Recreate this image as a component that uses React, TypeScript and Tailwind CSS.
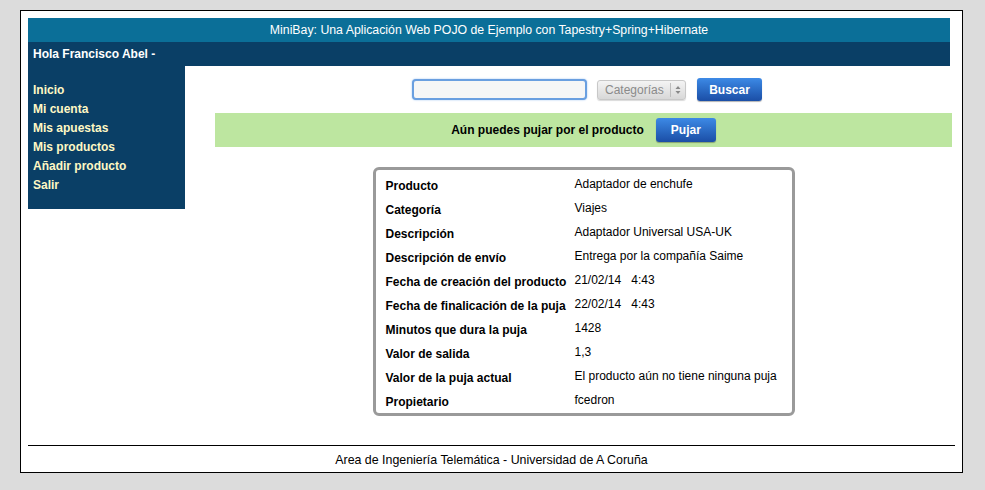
import React from "react";

const rows: [string, React.ReactNode][] = [
  ["Producto", "Adaptador de enchufe"],
  ["Categoría", "Viajes"],
  ["Descripción", "Adaptador Universal USA-UK"],
  ["Descripción de envío", "Entrega por la compañía Saime"],
  ["Fecha de creación del producto", <span>21/02/14&nbsp;&nbsp;&nbsp;4:43</span>],
  ["Fecha de finalicación de la puja", <span>22/02/14&nbsp;&nbsp;&nbsp;4:43</span>],
  ["Minutos que dura la puja", "1428"],
  ["Valor de salida", "1,3"],
  ["Valor de la puja actual", "El producto aún no tiene ninguna puja"],
  ["Propietario", "fcedron"],
];

const menu = ["Inicio", "Mi cuenta", "Mis apuestas", "Mis productos", "Añadir producto", "Salir"];

function BlueButton({ label, w, h }: { label: string; w: string; h: string }) {
  return (
    <button
      className={`${w} ${h} rounded-[3px] bg-gradient-to-b from-[#3d8ae6] to-[#1b4ea6] text-white font-bold text-[12px] flex items-center justify-center shadow-[0_1px_1px_rgba(0,0,0,0.3)]`}
    >
      {label}
    </button>
  );
}

export default function App() {
  return (
    <div
      className="w-[985px] h-[490px] bg-[#dcdcdc] pt-[10px] pl-[20px]"
      style={{ fontFamily: '"Liberation Sans", Arial, sans-serif' }}
    >
      <div className="w-[943px] h-[463px] bg-white border border-black pt-[7px] pl-[7px] flex flex-col">
        {/* Header */}
        <div className="w-[922px] h-[24px] bg-[#0b6f98] text-white text-[12.3px] flex items-center justify-center">
          MiniBay: Una Aplicación Web POJO de Ejemplo con Tapestry+Spring+Hibernate
        </div>
        <div className="w-[922px] h-[24px] bg-[#0a3f66] text-white text-[12px] font-bold flex items-center pl-[5px]">
          Hola Francisco Abel -
        </div>

        <div className="flex">
          {/* Sidebar */}
          <div className="w-[157px] h-[143px] bg-[#0a3f66] pt-[17px] pl-[5px] flex flex-col self-start">
            {menu.map((m) => (
              <div key={m} className="h-[19px] text-[12px] font-bold text-[#fff8c4] leading-[14px]">
                {m}
              </div>
            ))}
          </div>

          {/* Main */}
          <div className="ml-[30px] w-[737px] flex flex-col items-center">
            <div className="mt-[12px] h-[23px] flex items-center ml-[7px]">
              <div className="w-[175px] h-[21px] rounded-[4px] border-2 border-[#6a9fe0] bg-[#f6f6f6] shadow-[0_0_2px_#9cc2f0]" />
              <div className="ml-[10px] w-[89px] h-[20px] rounded-[3px] bg-gradient-to-b from-[#f4f4f4] to-[#d8d8d8] border border-[#c8c8c8] flex items-center text-[12px] text-[#8a8a8a] shadow-[0_1px_1px_rgba(0,0,0,0.15)]">
                <span className="pl-[7px] w-[72px]">Categorías</span>
                <span className="h-[14px] border-l border-[#bdbdbd]" />
                <svg width="10" height="12" viewBox="0 0 10 12" className="ml-[2px]">
                  <path d="M5 2 L7.5 5 L2.5 5 Z" fill="#888" />
                  <path d="M5 10 L7.5 7 L2.5 7 Z" fill="#888" />
                </svg>
              </div>
              <div className="ml-[11px]">
                <BlueButton label="Buscar" w="w-[65px]" h="h-[23px]" />
              </div>
            </div>

            <div className="mt-[12px] w-[737px] h-[34px] bg-[#bde6a0] flex items-center justify-center">
              <span className="text-[12px] font-bold text-black">Aún puedes pujar por el producto</span>
              <div className="ml-[12px]">
                <BlueButton label="Pujar" w="w-[60px]" h="h-[24px]" />
              </div>
            </div>

            <div className="mt-[20px] w-[422px] border-[3px] border-[#9a9a9a] rounded-[6px] pt-[3px] pl-[10px] text-[12px] text-black">
              {rows.map(([k, v]) => (
                <div key={k} className="h-[24px] flex">
                  <div className="w-[189px] font-bold pt-[6px] leading-[14px]">{k}</div>
                  <div className="pt-[4px] leading-[14px]">{v}</div>
                </div>
              ))}
            </div>
          </div>
        </div>

        {/* Footer */}
        <div className="mt-[29px] w-[927px] border-t border-black pt-[7px] text-center text-[12.4px] text-black leading-[14px]">
          Area de Ingeniería Telemática - Universidad de A Coruña
        </div>
      </div>
    </div>
  );
}
